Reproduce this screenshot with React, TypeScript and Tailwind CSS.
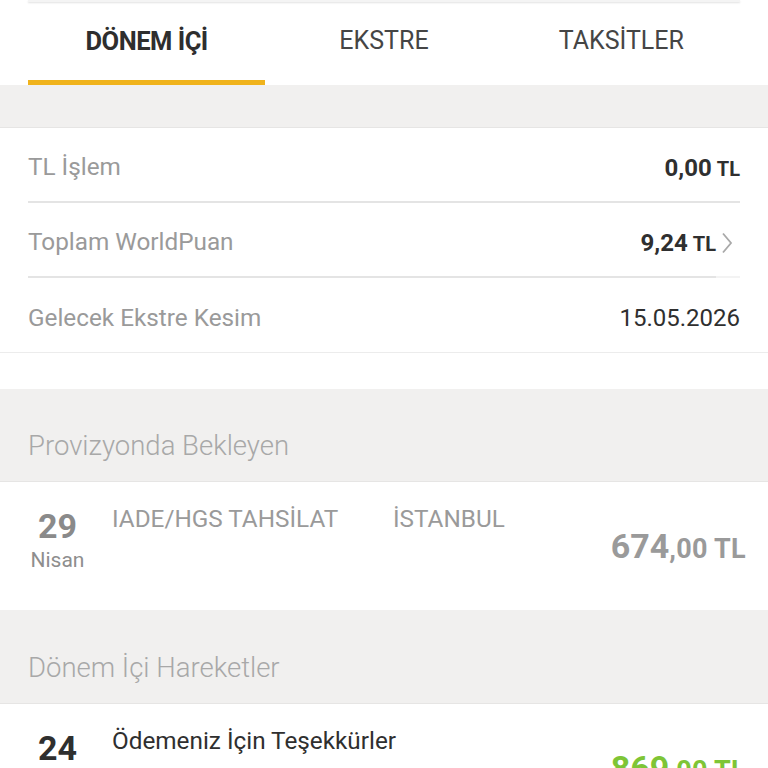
import React from "react";

const font = { fontFamily: "Roboto, 'Noto Sans', sans-serif" };

function InfoRow({ label, children, divider }: { label: string; children: React.ReactNode; divider?: React.ReactNode }) {
  return (
    <div className="h-[75px] flex flex-col">
      <div className="flex-1 flex items-center justify-between px-[28px] pt-[6px]">
        <span className="text-[24.3px] text-[#9a9a9a]">{label}</span>
        {children}
      </div>
      {divider}
    </div>
  );
}

function SectionHeader({ title, h }: { title: string; h: string }) {
  return (
    <div className={`bg-[#f1f0ef] ${h} flex items-center px-[28px] pt-[22px] border-b border-[#e6e5e4]`}>
      <span className="text-[27.5px] font-light text-[#a8a8a8]">{title}</span>
    </div>
  );
}

function TxRow({
  day,
  month,
  title,
  city,
  amount,
  dayColor,
  titleColor,
  amountColor,
}: {
  day: string;
  month?: string;
  title: string;
  city?: string;
  amount: string;
  dayColor: string;
  titleColor: string;
  amountColor: string;
}) {
  return (
    <div className="h-[128px] bg-white flex items-center pr-[22px]">
      <div className="w-[112px] shrink-0 self-start pt-[25px] pl-[3px] flex">
        <div className="w-[118px] flex flex-col items-center">
          <span className={`text-[34px] font-bold leading-[38px] ${dayColor}`}>{day}</span>
          {month && <span className="text-[21px] leading-[28px] text-[#8e8e8e] mt-[1px]">{month}</span>}
        </div>
      </div>
      <div className="flex-1 self-start pt-[22px] flex whitespace-nowrap">
        <span className={`text-[24.3px] leading-[30px] ${city ? "w-[281px]" : ""} ${titleColor}`}>{title}</span>
        {city && <span className="text-[24.3px] leading-[30px] text-[#9a9a9a]">{city}</span>}
      </div>
      <div className={`font-bold ${amountColor} flex items-baseline whitespace-nowrap`}>
        <span className="text-[34px]">{amount}</span>
        <span className="text-[27px] tracking-[0.3px]">,00 TL</span>
      </div>
    </div>
  );
}

export default function App() {
  return (
    <div className="w-[768px] h-[768px] overflow-hidden bg-white" style={font}>
      {/* card edge above */}
      <div className="mx-[28px] h-[2px] bg-[#f4f4f4] shadow-[0_1px_2px_rgba(0,0,0,0.12)]" />
      {/* tabs */}
      <div className="h-[83px] grid grid-cols-3 px-[28px]">
        <div className="flex flex-col">
          <div className="flex-1 flex items-center justify-center">
            <span className="text-[25.5px] font-bold text-[#2e2e2e] tracking-[-0.5px]">DÖNEM İÇİ</span>
          </div>
          <div className="h-[5px] bg-[#f0b31c]" />
        </div>
        <div className="flex items-center justify-center pb-[5px]">
          <span className="text-[25px] text-[#454545]">EKSTRE</span>
        </div>
        <div className="flex items-center justify-center pb-[5px]">
          <span className="text-[25px] text-[#454545]">TAKSİTLER</span>
        </div>
      </div>
      {/* gray band */}
      <div className="h-[43px] bg-[#f1f0ef] border-b border-[#e6e5e4]" />
      {/* info rows */}
      <div className="bg-white">
        <InfoRow label="TL İşlem" divider={<div className="mx-[28px] h-[2px] bg-[#e4e4e4]" />}>
          <span className="font-bold text-[#2f2f2f] flex items-baseline gap-[5px]">
            <span className="text-[24px]">0,00</span>
            <span className="text-[20px]">TL</span>
          </span>
        </InfoRow>
        <InfoRow
          label="Toplam WorldPuan"
          divider={
            <div className="ml-[28px] mr-[28px] flex">
              <div className="flex-1 h-[2px] bg-[#e4e4e4]" />
              <div className="w-[24px] h-[2px] bg-[#f3f3f3]" />
            </div>
          }
        >
          <span className="flex items-center">
            <span className="font-bold text-[#2f2f2f] flex items-baseline gap-[5px]">
              <span className="text-[24px]">9,24</span>
              <span className="text-[20px]">TL</span>
            </span>
            <svg width="12" height="22" viewBox="0 0 12 22" className="ml-[5px] mr-[7px]">
              <path d="M2 1.5 L10 11 L2 20.5" fill="none" stroke="#a9a9a9" strokeWidth="1.8" />
            </svg>
          </span>
        </InfoRow>
        <InfoRow label="Gelecek Ekstre Kesim" divider={<div className="h-[1px] bg-[#ececec]" />}>
          <span className="text-[24px] text-[#2f2f2f]">15.05.2026</span>
        </InfoRow>
      </div>
      <div className="h-[36px] bg-white" />
      <SectionHeader title="Provizyonda Bekleyen" h="h-[93px]" />
      <TxRow
        day="29"
        month="Nisan"
        title="IADE/HGS TAHSİLAT"
        city="İSTANBUL"
        amount="674"
        dayColor="text-[#8a8a8a]"
        titleColor="text-[#9a9a9a]"
        amountColor="text-[#9a9a9a]"
      />
      <SectionHeader title="Dönem İçi Hareketler" h="h-[94px]" />
      <TxRow
        day="24"
        title="Ödemeniz İçin Teşekkürler"
        amount="869"
        dayColor="text-[#2f2f2f]"
        titleColor="text-[#2f2f2f]"
        amountColor="text-[#7ec536]"
      />
    </div>
  );
}
